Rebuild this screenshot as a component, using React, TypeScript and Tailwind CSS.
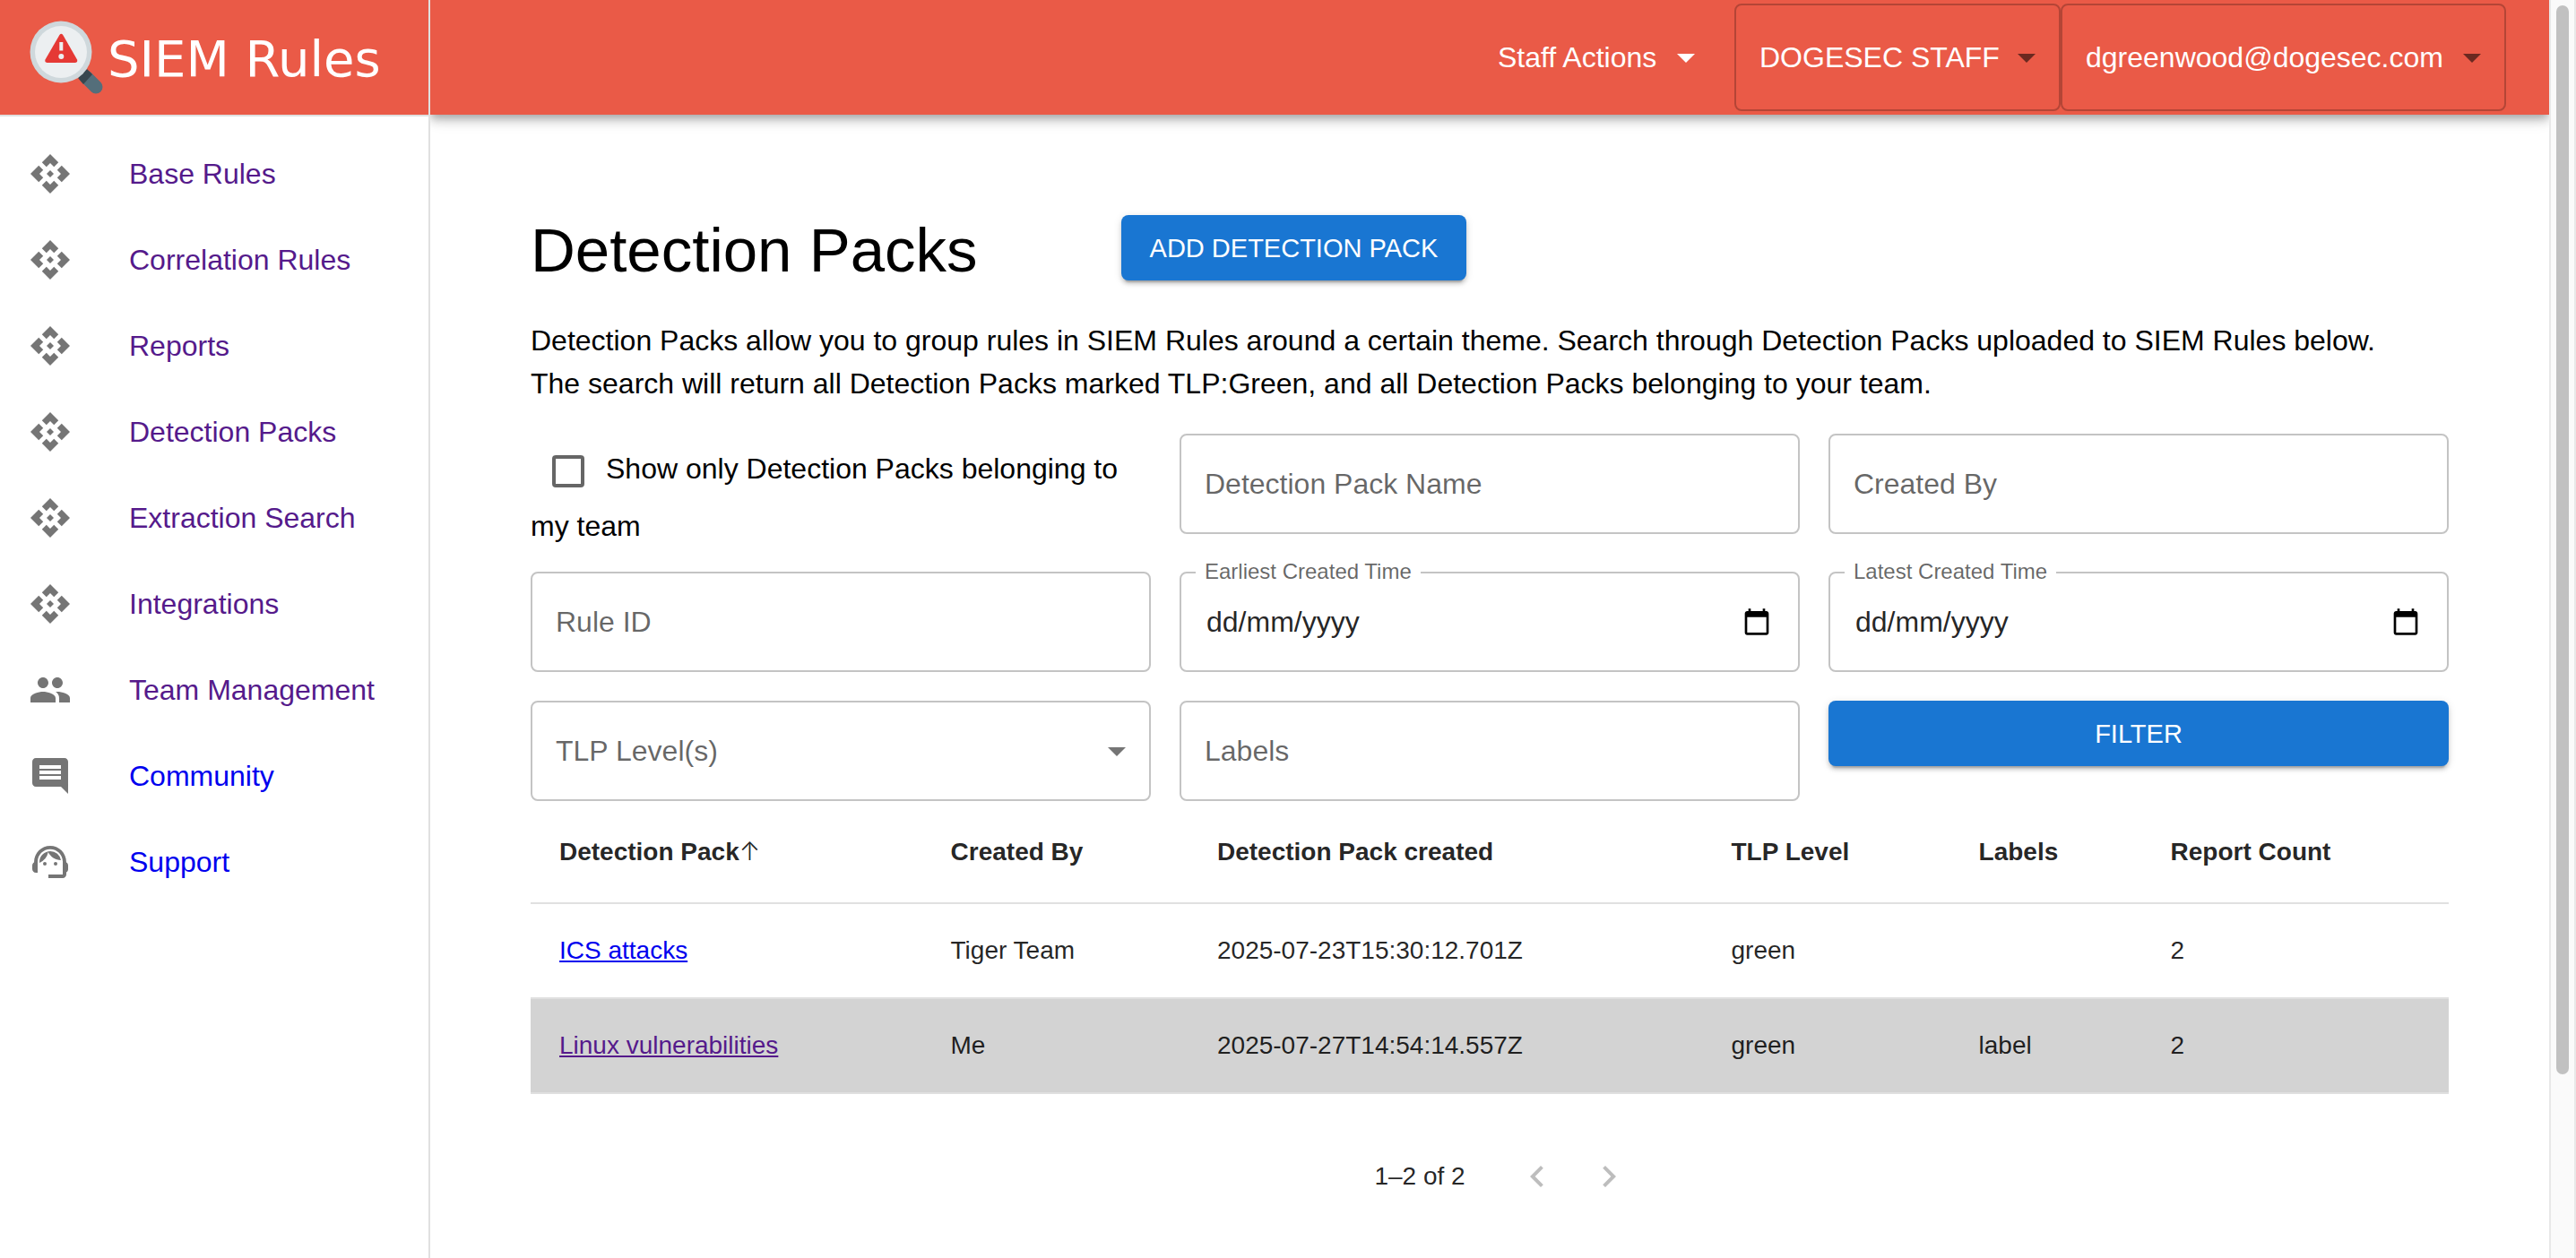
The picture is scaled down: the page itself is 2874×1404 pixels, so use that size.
import React from "react";
import {
  MdApi,
  MdArrowDropDown,
  MdChevronLeft,
  MdChevronRight,
  MdComment,
  MdPeople,
  MdSupportAgent,
} from "react-icons/md";

const navItems = [
  { label: "Base Rules", icon: MdApi, visited: true },
  { label: "Correlation Rules", icon: MdApi, visited: true },
  { label: "Reports", icon: MdApi, visited: true },
  { label: "Detection Packs", icon: MdApi, visited: true },
  { label: "Extraction Search", icon: MdApi, visited: true },
  { label: "Integrations", icon: MdApi, visited: true },
  { label: "Team Management", icon: MdPeople, visited: true },
  { label: "Community", icon: MdComment, visited: false },
  { label: "Support", icon: MdSupportAgent, visited: false },
];

const packs = [
  {
    name: "ICS attacks",
    by: "Tiger Team",
    created: "2025-07-23T15:30:12.701Z",
    tlp: "green",
    labels: "",
    count: 2,
    visited: false,
  },
  {
    name: "Linux vulnerabilities",
    by: "Me",
    created: "2025-07-27T14:54:14.557Z",
    tlp: "green",
    labels: "label",
    count: 2,
    visited: true,
  },
];

const columns = [
  { title: "Detection Pack", width: "w-[20.4%]" },
  { title: "Created By", width: "w-[13.9%]" },
  { title: "Detection Pack created", width: "w-[26.8%]" },
  { title: "TLP Level", width: "w-[12.9%]" },
  { title: "Labels", width: "w-[10%]" },
  { title: "Report Count", width: "w-[16%]" },
];

const raised =
  "shadow-[0_6px_2px_-4px_rgba(0,0,0,0.2),0_4px_4px_0_rgba(0,0,0,0.14),0_2px_10px_0_rgba(0,0,0,0.12)]";
const fieldBox =
  "h-[112px] w-full rounded-lg border-2 border-[#c4c4c4] bg-white px-[26px] text-[32px] text-black/87 outline-none placeholder:text-black/60 placeholder:opacity-100";

function LogoMark() {
  return (
    <svg viewBox="0 0 84 84" className="size-[84px] shrink-0" aria-hidden="true">
      <path d="M64 64l11 11" stroke="#546e7a" strokeWidth="15" strokeLinecap="round" />
      <path d="M55 65l10-10 6 6-10 11z" fill="#37474f" />
      <circle cx="36" cy="36" r="34.500" fill="#cfd8dc" />
      <circle cx="36" cy="36" r="29" fill="#eceff1" />
      <path
        d="M34.400 17q1.900-2.600 3.800 0L54 44.500q1 3-2 3.500H20.500q-3-.500-2-3.500z"
        fill="#e53935"
      />
      <path d="M36.300 25v9.500" stroke="#eceff1" strokeWidth="4" />
      <circle cx="36.300" cy="41" r="3" fill="#eceff1" />
    </svg>
  );
}

function CalendarIcon() {
  return (
    <svg viewBox="0 0 24 24" className="size-8" fill="currentColor" aria-hidden="true">
      <path d="M20 3h-1V1h-2v2H7V1H5v2H4c-1.100 0-2 .9-2 2v16c0 1.100.9 2 2 2h16c1.100 0 2-.9 2-2V5c0-1.100-.9-2-2-2zm0 18H4V8h16v13z" />
    </svg>
  );
}

function TextField({ label }: { label: string }) {
  return <input type="text" aria-label={label} placeholder={label} className={fieldBox} />;
}

function DateField({ id, label }: { id: string; label: string }) {
  return (
    <div className="relative">
      <label
        htmlFor={id}
        className="absolute -top-4 left-[18px] bg-white px-2.5 text-[24px] leading-8 text-black/60"
      >
        {label}
      </label>
      <input
        id={id}
        type="text"
        placeholder="dd/mm/yyyy"
        className="h-[112px] w-full rounded-lg border-2 border-[#c4c4c4] bg-white px-7 text-[32px] outline-none placeholder:text-black/87 placeholder:opacity-100"
      />
      <button
        type="button"
        aria-label={"Open calendar for " + label}
        className="absolute top-10 right-8 text-black"
      >
        <CalendarIcon />
      </button>
    </div>
  );
}

type HeaderSelectProps = {
  label: string;
  value: string;
  box: string;
  arrow: string;
};

function HeaderSelect({ label, value, box, arrow }: HeaderSelectProps) {
  return (
    <div className="relative">
      <select
        aria-label={label}
        className={"h-[120px] appearance-none bg-transparent text-[32px] text-white " + box}
      >
        <option>{value}</option>
      </select>
      <MdArrowDropDown
        aria-hidden="true"
        className={"pointer-events-none absolute top-9 right-3.5 size-12 " + arrow}
      />
    </div>
  );
}

export default function App() {
  return (
    <div className="flex min-h-screen bg-white font-['Liberation_Sans',Arial,sans-serif] text-[32px] leading-[48px] text-black">
      <aside className="relative z-10 w-[480px] shrink-0 border-r-2 border-[#e0e0e0] bg-white">
        <a
          href="#home"
          className="flex h-[130px] items-start gap-1 border-b-2 border-[#e0e0e0] bg-[#ea5a47] pt-[22px] pl-8 text-white"
        >
          <LogoMark />
          <span className="font-['Verdana','DejaVu_Sans',sans-serif] text-[56px] leading-[88px] whitespace-nowrap">
            SIEM Rules
          </span>
        </a>
        <nav className="flex flex-col py-4">
          {navItems.map((item) => (
            <a
              key={item.label}
              href={"#" + item.label.toLowerCase().replace(" ", "-")}
              className="flex h-24 items-center gap-16 pl-8"
            >
              <item.icon className="size-12 shrink-0 text-black/54" aria-hidden="true" />
              <span className={item.visited ? "text-[#551a8b]" : "text-[#0000ee]"}>{item.label}</span>
            </a>
          ))}
        </nav>
      </aside>

      <div className="flex min-w-0 grow flex-col">
        <header className="flex h-32 items-center justify-end bg-[#ea5a47] pr-12 shadow-[0_4px_8px_-2px_rgba(0,0,0,0.2),0_8px_10px_0_rgba(0,0,0,0.14),0_2px_20px_0_rgba(0,0,0,0.12)]">
          <div className="mr-4">
            <HeaderSelect
              label="Staff actions"
              value="Staff Actions"
              box="pr-[68px] pl-7"
              arrow="text-white"
            />
          </div>
          <HeaderSelect
            label="Team"
            value="DOGESEC STAFF"
            box="rounded-lg border-2 border-black/23 pr-[66px] pl-[26px]"
            arrow="text-black/54"
          />
          <HeaderSelect
            label="Account"
            value="dgreenwood@dogesec.com"
            box="rounded-lg border-2 border-black/23 pr-[68px] pl-[26px]"
            arrow="text-black/54"
          />
        </header>

        <main className="px-28 pt-28">
          <div className="flex items-start gap-[160px]">
            <h1 className="text-[69px] leading-[80px] whitespace-nowrap">Detection Packs</h1>
            <button
              type="button"
              className={"h-[73px] rounded-lg bg-[#1976d2] px-8 text-[29px] whitespace-nowrap text-white " + raised}
            >
              ADD DETECTION PACK
            </button>
          </div>

          <p className="mt-9">
            Detection Packs allow you to group rules in SIEM Rules around a certain theme. Search through
            Detection Packs uploaded to SIEM Rules below.
            <br />
            The search will return all Detection Packs marked TLP:Green, and all Detection Packs belonging
            to your team.
          </p>

          <form className="mt-8 grid grid-cols-3 gap-8">
            <label className="block leading-[38px]">
              <span className="inline-flex size-[84px] items-center justify-center align-middle">
                <input
                  type="checkbox"
                  className="size-9 appearance-none rounded-sm border-4 border-black/60"
                />
              </span>
              Show only Detection Packs belonging to my team
            </label>
            <TextField label="Detection Pack Name" />
            <TextField label="Created By" />
            <TextField label="Rule ID" />
            <DateField id="earliest" label="Earliest Created Time" />
            <DateField id="latest" label="Latest Created Time" />
            <div className="relative">
              <select
                aria-label="TLP Level(s)"
                className="h-[112px] w-full appearance-none rounded-lg border-2 border-[#c4c4c4] bg-white px-[26px] text-[32px] text-black/60"
              >
                <option>TLP Level(s)</option>
              </select>
              <MdArrowDropDown
                aria-hidden="true"
                className="pointer-events-none absolute top-8 right-3.5 size-12 text-black/54"
              />
            </div>
            <TextField label="Labels" />
            <button
              type="button"
              className={"h-[73px] rounded-lg bg-[#1976d2] text-[29px] text-white " + raised}
            >
              FILTER
            </button>
          </form>

          <table className="w-full table-fixed border-collapse text-left text-[28px] text-black/87">
            <thead>
              <tr className="border-b-2 border-[#e0e0e0]">
                {columns.map((column, index) => (
                  <th key={column.title} className={"p-8 leading-[48px] font-bold " + column.width}>
                    {column.title}
                    {index === 0 && <span className="font-['Inter'] font-light">↑</span>}
                  </th>
                ))}
              </tr>
            </thead>
            <tbody>
              {packs.map((pack) => (
                <tr
                  key={pack.name}
                  className={
                    pack.visited
                      ? "border-b-2 border-[#e0e0e0] bg-[#d3d3d3] leading-10"
                      : "border-b-2 border-[#e0e0e0] leading-10"
                  }
                >
                  <td className="p-8">
                    <a
                      href="#pack"
                      className={pack.visited ? "text-[#551a8b] underline" : "text-[#0000ee] underline"}
                    >
                      {pack.name}
                    </a>
                  </td>
                  <td className="p-8">{pack.by}</td>
                  <td className="p-8">{pack.created}</td>
                  <td className="p-8">{pack.tlp}</td>
                  <td className="p-8">{pack.labels}</td>
                  <td className="p-8">{pack.count}</td>
                </tr>
              ))}
            </tbody>
          </table>

          <div className="mt-10 flex h-[104px] items-center justify-center pl-11 text-[28px] text-black/87">
            <span className="mr-10">1–2 of 2</span>
            <button type="button" disabled aria-label="Previous page" className="p-4 text-black/26">
              <MdChevronLeft className="size-12" />
            </button>
            <button type="button" disabled aria-label="Next page" className="p-4 text-black/26">
              <MdChevronRight className="size-12" />
            </button>
          </div>
        </main>
      </div>

      <div className="w-[30px] shrink-0 border-x-2 border-[#e8e8e8] bg-[#fafafa] px-1.5 pt-1.5" aria-hidden="true">
        <div className="h-[85vh] rounded-full bg-[#c1c1c1]" />
      </div>
    </div>
  );
}
